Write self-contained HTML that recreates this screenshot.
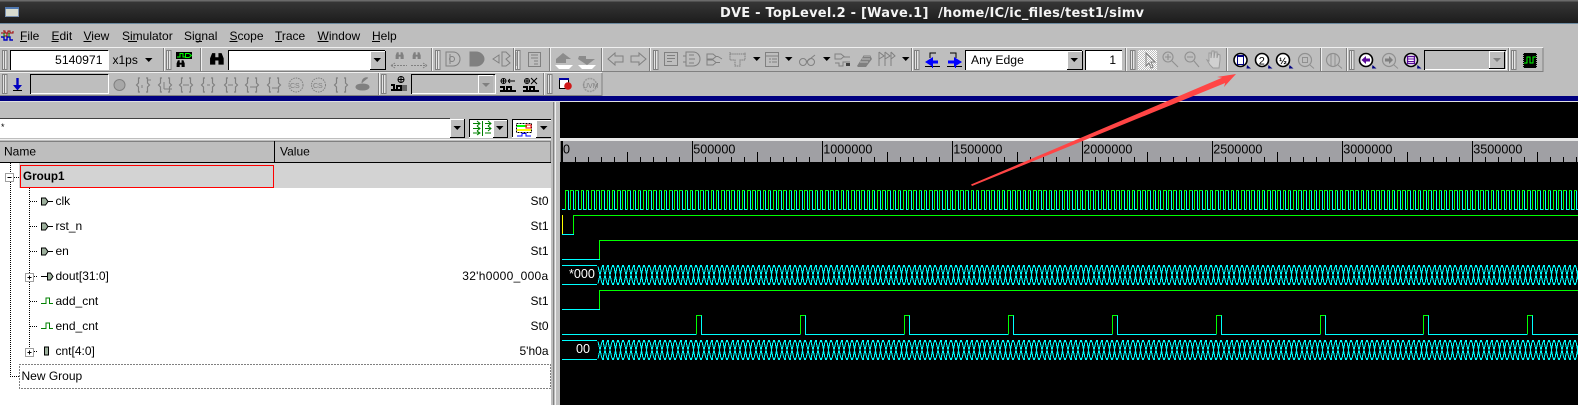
<!DOCTYPE html>
<html><head><meta charset="utf-8"><title>DVE</title>
<style>
html,body{margin:0;padding:0;width:1578px;height:405px;overflow:hidden;background:#bebebe}
svg{display:block}
text{font-family:"Liberation Sans",sans-serif;font-size:12px;fill:#000;white-space:pre}
.g{fill:none;stroke:#808080}
.k{fill:none;stroke:#000}
.r{text-anchor:end}
.dot{fill:none;stroke:#000;stroke-dasharray:1 1;shape-rendering:crispEdges}
.gf{fill:#808080;stroke:none}
.kf{fill:#000;stroke:none}
</style></head><body>
<svg id="s" width="1578" height="405" viewBox="0 0 1578 405" xmlns="http://www.w3.org/2000/svg">
<defs>
<linearGradient id="tb" x1="0" y1="0" x2="0" y2="1"><stop offset="0" stop-color="#383838"/><stop offset="1" stop-color="#1c1c1c"/></linearGradient>
<pattern id="dith" width="2" height="2" patternUnits="userSpaceOnUse"><rect width="2" height="2" fill="#fff"/><rect width="1" height="1" fill="#bebebe"/><rect x="1" y="1" width="1" height="1" fill="#bebebe"/></pattern>
<g id="H"><rect x=".5" y=".5" width="4.5" height="19" fill="#e4e4e4" stroke="#808080"/><path d="M2.5 1v18" stroke="#808080"/></g>
<g id="B"><path class="g" d="M5 1H3.5V6L1.5 8 3.5 10V15H5M11 1H12.5V6L14.5 8 12.5 10V15H11" stroke-width="1.2"/></g>
<g id="T"><path class="kf" d="M0 0H7.5L3.75 4Z"/></g>
<g id="P"><path d="M41.5 -3.5H45.5L48 0 45.5 3.5H41.5Z" fill="#9db09d" stroke="#000"/><path d="M48 0H53" stroke="#000"/></g>
<g id="W"><path d="M41 3H46V-2.5H49.5V3H53" fill="none" stroke="#008000" stroke-width="1"/></g>
<g id="C"><circle r="6.5" fill="#fff" stroke="#000" stroke-width="1.6"/><path d="M5 5L9 8.5H4.5Z" fill="#000080" transform="translate(1.5 0)"/></g>
<g id="D"><circle r="6.5" fill="none" stroke="#909090" stroke-width="1.2"/><path d="M5 5L9 8.5" stroke="#909090"/></g>
<g id="Bino"><path d="M1 13V7L3 2H6V6H9V2H12L14 7V13H9V9H6V13Z"/></g>
</defs>

<!-- background + title bar -->
<rect width="1578" height="405" fill="#bebebe"/>
<rect width="1578" height="23" fill="url(#tb)"/>
<rect width="1578" height="1.5" fill="#6a6a6a"/>
<rect y="23" width="1578" height="1" fill="#6c8aa0"/>
<rect x="5.5" y="7.5" width="13" height="9" fill="#d8dcd0" stroke="#7890b0"/><rect x="5" y="7" width="14" height="2" fill="#5078b0"/>
<text x="720" y="17" textLength="424" style="font-family:'DejaVu Sans',sans-serif;font-weight:bold;font-size:13px;fill:#f4f4f4">DVE - TopLevel.2 - [Wave.1]  /home/IC/ic_files/test1/simv</text>

<!-- menu -->
<g transform="translate(1 30)"><path d="M2 1H4V3H7V1H9V3H12V1M0 3H3V6H6V3" fill="none" stroke="#a00000"/><path d="M0 7H3V10H6V7H9V10H12" fill="none" stroke="#0000c0" stroke-width="1.4"/><path d="M3 3V7M8 3V7" stroke="#008000"/></g>
<text x="20" y="40">File</text><path d="M20 41.5h7" stroke="#000"/>
<text x="51.5" y="40">Edit</text><path d="M51.5 41.5h7" stroke="#000"/>
<text x="83.5" y="40">View</text><path d="M83.5 41.5h8" stroke="#000"/>
<text x="122" y="40">Simulator</text><path d="M128 41.5h9" stroke="#000"/>
<text x="184" y="40">Signal</text><path d="M196 41.5h6" stroke="#000"/>
<text x="229.5" y="40">Scope</text><path d="M229.5 41.5h8" stroke="#000"/>
<text x="275" y="40">Trace</text><path d="M275 41.5h7" stroke="#000"/>
<text x="317.5" y="40">Window</text><path d="M317.5 41.5h11" stroke="#000"/>
<text x="372" y="40">Help</text><path d="M372 41.5h8" stroke="#000"/>

<!-- toolbar rows frame -->
<path d="M0 47.5H1543M0 72.5H602" stroke="#f0f0f0"/>
<path d="M0 71.5H1543V48M0 95.5H602V73" stroke="#808080" fill="none"/>
<g fill="none" stroke="#808080">
<path d="M163.5 48V71M200.5 48V71M431.5 48V71M513.5 48V71M549.5 48V71M601.5 48V71M649.5 48V71M911.5 48V71M1125.5 48V71M1226.5 48V71M1320.5 48V71M1346.5 48V71M1508.5 48V71M378.5 73V95M543.5 73V95"/>
</g>
<g fill="none" stroke="#f0f0f0">
<path d="M164.5 48V71M201.5 48V71M432.5 48V71M514.5 48V71M550.5 48V71M602.5 48V71M650.5 48V71M912.5 48V71M1126.5 48V71M1227.5 48V71M1321.5 48V71M1347.5 48V71M1509.5 48V71M379.5 73V95M544.5 73V95"/>
</g>
<use href="#H" x="2" y="50"/><use href="#H" x="166" y="50"/><use href="#H" x="435" y="50"/><use href="#H" x="515" y="50"/><use href="#H" x="653" y="50"/><use href="#H" x="914" y="50"/><use href="#H" x="1130" y="50"/><use href="#H" x="1349" y="50"/><use href="#H" x="1511" y="50"/>
<use href="#H" x="2" y="74"/><use href="#H" x="381" y="74"/><use href="#H" x="547" y="74"/>

<!-- entries row 1 -->
<rect x="10" y="50" width="98" height="20" fill="#fff"/><path d="M10.5 70V50.5H108" class="k"/><path d="M11 69.5H108.5V51" fill="none" stroke="#fff"/>
<text class="r" x="102.5" y="64" style="font-size:12.2px">5140971</text>
<text x="112.5" y="64" style="font-size:12px">x1ps</text>
<use href="#T" x="145" y="58"/>

<g transform="translate(176 52)"><rect y="0" width="16" height="7" fill="#000"/><path d="M1 5H4V1.5H7V5H9" fill="none" stroke="#00ff00"/><path d="M9.5 1.5H13L15.5 3.5 13 5.5H9.5Z" fill="none" stroke="#00ff00"/><g transform="translate(0 7) scale(.62)" fill="#000"><use href="#Bino"/></g></g>
<g transform="translate(209 51) scale(1.05)" fill="#000"><use href="#Bino"/></g>

<rect x="228" y="50" width="157" height="20" fill="#fff"/><path d="M228.5 70V50.5H385" class="k"/>
<rect x="370" y="51" width="15" height="18" fill="#bebebe"/><path d="M370.5 69V51.5H385" stroke="#fff" fill="none"/><path d="M370 69.5H385.5V51" class="k"/><use href="#T" x="373.5" y="58"/>

<g fill="#808080"><g transform="translate(395 51) scale(.62)"><use href="#Bino"/></g><g transform="translate(412 51) scale(.62)"><use href="#Bino"/></g></g>
<path d="M391 65.5H407M391 65.5L395 63M391 65.5L395 68M411 65.5H427M427 65.5L423 63M427 65.5L423 68" class="g" stroke-dasharray="2 1"/>

<g class="g">
<path d="M446 52H453C458 52 460 56 460 59S458 66 453 66H446ZM450 54V64" /><circle cx="452" cy="59" r="2.5"/>
<path d="M470 52H476C481 52 484 56 484 59S481 66 476 66H470Z" fill="#808080"/>
<path d="M493 59L499 55V63ZM502 52H506L510 56 506 59 510 63 506 66H502Z"/>
<rect x="528.5" y="52.5" width="12" height="14"/><path d="M531 55h7M531 58h7M534 61h4M534 64h4"/>
<path d="M520 52V66M517 52V66"/>
</g>
<g class="gf"><path d="M556 63H566V59H571L563 53 556 59Z" opacity=".8"/><path d="M555 65H573L569 69H559Z" fill="#fff"/><path d="M579 56H586V59H595L587 65 578 59Z" opacity=".8"/><path d="M578 65H596L592 69H582Z" fill="#fff"/></g>
<g class="g"><path d="M608 59L615 53V56H623V62H615V65Z"/><path d="M646 59L639 53V56H631V62H639V65Z"/>
<rect x="664.5" y="52.5" width="13" height="13"/><path d="M667 55.5h8M667 58.5h8M667 61.5h5"/>
<path d="M686 52H693C698 52 700 56 700 59S698 66 693 66H686ZM683 56H686M683 62H686M689 55h5M689 59h6M689 63h5"/>
<path d="M707 54H713L716 56.5 713 59H707ZM716 56.5H718M707 60H713L716 62.5 713 65H707ZM716 62.5H720M718 56.5L722 59"/>
<path d="M730 52V54H745V52M730 54V60H735V66H740V60H745V54" stroke-dasharray="1.5 .6"/>
<rect x="765.5" y="52.5" width="13" height="14"/><path d="M766 56h12M769 59h2M772 59h5M772 62h5M769 62h2"/>
<circle cx="803" cy="62" r="3.5"/><circle cx="811" cy="62" r="3.5"/><path d="M806 62L815 55"/>
<path d="M835 54H841L844 56.5 841 59H835ZM844 57H850M835 63H839V66H843V62H850"/>
</g>
<rect x="846" y="63" width="4" height="3" fill="#404040"/>
<path d="M857 66L864 55H870L872 59 866 67H858Z" fill="#808080"/><path d="M860 62h8M862 59h8M864 56h6" stroke="#bebebe"/>
<path d="M879 52V66M885 52V66M891 52V66M879 52L884 56 879 59M885 52L890 56 885 59M891 52L895 56 891 59" class="g"/>
<use href="#T" x="753" y="57"/><use href="#T" x="785" y="57"/><use href="#T" x="823" y="57"/><use href="#T" x="902" y="57"/>

<!-- edge buttons -->
<g fill="none" stroke="#000"><path d="M930 58V53H936"/><path d="M925 66.5H940"/><path d="M956 58V53H950"/><path d="M947 66.5H962"/></g>
<path d="M925 62L933 57V60.5H938V63.5H933V67Z" fill="#0000ff"/><path d="M962 62L954 57V60.5H948V63.5H954V67Z" fill="#0000ff"/>
<path d="M932.5 59V68M955.5 59V68" stroke="#0000ff" fill="none"/>

<rect x="965" y="50" width="117" height="20" fill="#fff"/><path d="M965.5 70V50.5H1082" class="k"/>
<text x="971" y="64" style="font-size:12.2px">Any Edge</text>
<rect x="1067" y="51" width="15" height="18" fill="#bebebe"/><path d="M1067.5 69V51.5H1082" stroke="#fff" fill="none"/><path d="M1067 69.5H1082.5V51" class="k"/><use href="#T" x="1070.5" y="58"/>
<rect x="1085" y="50" width="37" height="20" fill="#fff"/><path d="M1085.5 70V50.5H1122" class="k"/><text class="r" x="1116" y="64">1</text>

<!-- pointer/zoom -->
<rect x="1138" y="50" width="19" height="20" fill="url(#dith)"/>
<path d="M1146 53V66L1149 63 1151 68 1153 67 1151 62H1155Z" class="g"/>
<g stroke="#909090" fill="none" stroke-width="1.1"><circle cx="1168" cy="57" r="5"/><path d="M1172 61L1178 67M1165 57h6M1168 54v6"/><circle cx="1190" cy="57" r="5"/><path d="M1194 61L1199 67M1187 57h6"/></g>
<path d="M1207 60L1210 65 1213 68H1219L1220 60V55L1218 54 1217 58V52L1215 52 1214 58V51L1212 51 1211 58V53L1209 53 1209 61Z" fill="#d0d0d0" stroke="#9a9a9a"/>

<use href="#C" x="1240.5" y="60"/><rect x="1237.5" y="55.5" width="6" height="9" fill="#fff" stroke="#000080"/><rect x="1237" y="55" width="7" height="2" fill="#000080"/>
<use href="#C" x="1262" y="60"/><text x="1258.7" y="64.5" style="font-size:11px">2</text>
<use href="#C" x="1283" y="60"/><text x="1279" y="64" style="font-size:9.5px;font-weight:bold">½</text>
<use href="#D" x="1305" y="60"/><rect x="1302.5" y="57.5" width="5" height="5" stroke="#909090" fill="none"/>
<use href="#D" x="1333" y="60"/><path d="M1331 54V66M1335 54V66" stroke="#909090" fill="none"/>
<use href="#C" x="1366" y="60"/><path d="M1361.5 60L1366 56V58.5H1370V61.5H1366V64Z" fill="#5a0a9a"/>
<use href="#D" x="1389" y="60"/><path d="M1393 60L1389 56V58.5H1385V61.5H1389V64Z" fill="#808080"/>
<use href="#C" x="1411" y="60"/><rect x="1407.5" y="56.5" width="7" height="7" fill="#fff" stroke="#5a0a9a" stroke-width="1.4"/><path d="M1408 59h6M1408 61.5h6" stroke="#5a0a9a"/>
<path d="M1424.5 70V50.5H1506" class="k"/><path d="M1425 69.5H1506.5V51" fill="none" stroke="#fff"/>
<rect x="1489" y="51" width="15" height="18" fill="#bebebe"/><path d="M1489.5 69V51.5H1504" stroke="#fff" fill="none"/><path d="M1489 68.5H1504.5V52" class="k"/><path d="M1493 58H1501L1497 62Z" fill="#808080"/>
<rect x="1523" y="53" width="14" height="15" fill="#000"/><path d="M1523.5 53V68M1536.5 53V68" stroke="#aaa" stroke-dasharray="1 1"/><path d="M1524 63H1527V57H1530V63H1533V57H1536" stroke="#00ff00" fill="none"/>

<!-- row 2 -->
<path d="M17.5 78V87" stroke="#0000c0" stroke-width="2.4"/><path d="M13 85H22L17.5 90.5Z" fill="#0000c0"/><path d="M13 90.5h9" stroke="#000"/>
<path d="M30.5 94V74.5H108" class="k"/><path d="M31 93.5H108.5V75" fill="none" stroke="#fff"/>
<circle cx="119.5" cy="85" r="5.5" fill="#a8a8a8" stroke="#808080"/>
<use href="#B" x="135" y="77"/><use href="#B" x="157" y="77"/><use href="#B" x="178" y="77"/><use href="#B" x="200" y="77"/><use href="#B" x="223" y="77"/><use href="#B" x="244" y="77"/><use href="#B" x="266" y="77"/><use href="#B" x="333" y="77"/>
<g class="g"><path d="M142 85V88M147 80H151M164 82V89M164 89H172M183 85H189M207 85H210M228 85H233M250 87H257M272 88H279"/></g>
<g fill="none" stroke="#808080" stroke-dasharray="1.5 1"><circle cx="296" cy="85" r="7"/><circle cx="318.5" cy="85" r="7"/></g>
<text x="290" y="88" style="font-size:7px;fill:#808080">CS</text><text x="313" y="88" style="font-size:7px;fill:#808080">CS</text>
<path d="M356 87C356 83 369 83 369 87 369 91 356 91 356 87ZM362 83C362 79 365 77 368 78" fill="#808080" stroke="#808080"/>
<g transform="translate(391 76)"><circle cx="10" cy="3.5" r="3" fill="#fff" class="k"/><path d="M10 0V7M7 3.5H13" stroke="#000"/><path d="M0 9H3V14H6V10H10V14H11" fill="none" stroke="#000" stroke-width="2"/><rect y="13" width="11" height="2" fill="#000"/><rect x="11" y="9" width="5" height="6" fill="#666"/></g>
<path d="M411.5 94V74.5H495" class="k"/><path d="M412 93.5H495.5V75" fill="none" stroke="#fff"/>
<rect x="478" y="75" width="15" height="18" fill="#b4b4b4"/><path d="M478.5 93V75.5H493" stroke="#fff" fill="none"/><path d="M482 83H490L486 87Z" fill="#808080"/>
<g transform="translate(500 78)"><circle cx="3.5" cy="3" r="2.5" fill="#fff" class="k"/><path d="M3.5 .5V5.5M1 3H6M8 3H15M8 3L10 1M8 3L10 5" stroke="#000" fill="none"/><path d="M0 9H4V13H7V9H11V13H15" stroke="#000" stroke-width="2" fill="none"/><rect y="12" width="16" height="2" fill="#000"/></g>
<g transform="translate(523 78)"><circle cx="4" cy="3" r="2.5" fill="#fff" class="k"/><path d="M4 .5V5.5M1.5 3H6.5M8 0L14 6M14 0L8 6" stroke="#000" fill="none"/><path d="M0 9H4V13H7V9H11V13H15" stroke="#000" stroke-width="2" fill="none"/><rect y="12" width="16" height="2" fill="#000"/></g>
<rect x="559.5" y="78.5" width="9" height="10" fill="#fff" stroke="#000"/><rect x="559" y="78" width="10" height="2" fill="#0000a0"/><circle cx="568" cy="86" r="3.8" fill="#d01818"/>
<g fill="none" stroke="#9a9a9a" stroke-width="1.5" stroke-dasharray="2 .8"><circle cx="590" cy="85" r="6.5"/></g><text x="583" y="88" style="font-size:7px;fill:#808080">UVM</text>

<!-- navy band -->
<rect y="96" width="1578" height="5" fill="#000080"/>
<rect y="101" width="1578" height="1" fill="#e0e0e0"/>

<!-- left pane -->
<rect x="0" y="118" width="450" height="20" fill="#fff"/><path d="M0 118.5H450" stroke="#404040"/>
<text x="1" y="130" style="font-size:9px">*</text>
<rect x="450" y="119" width="15" height="18" fill="#bebebe"/><path d="M450.5 137V119.5H464" stroke="#fff" fill="none"/><path d="M450 137.5H464.5V119" class="k"/><use href="#T" x="453.5" y="126"/>
<rect x="469" y="119" width="38" height="19" fill="#fff"/><path d="M469.5 137V119.5H507V137" class="k"/>
<g stroke="#008000" fill="none"><path d="M473 123.5H480M477 121L480 123.5 477 126M473 128.5H480M477 126L480 128.5 477 131M473 133H480M477 131L480 133 477 135M482.5 121V136M485 123.5H491M488 121L491 123.5 488 126M485 128.5H491M488 126L491 128.5 488 131M485 133H491"/></g>
<rect x="493" y="120" width="14" height="17" fill="#bebebe"/><path d="M493.5 137V120.5H507" stroke="#fff" fill="none"/><path d="M493 137.5H507.5V120" class="k"/><use href="#T" x="496" y="126"/>
<rect x="512" y="119" width="39" height="19" fill="#fff"/><path d="M512.5 137V119.5H551V137" class="k"/>
<rect x="516.5" y="123.5" width="15" height="9" fill="none" stroke="#000" stroke-dasharray="2 1"/><path d="M517 126H527" stroke="#00ff00" stroke-width="2"/><rect x="526" y="125" width="5" height="3" fill="none" stroke="#ff0000"/><path d="M517 130H531" stroke="#ffff00" stroke-width="2"/><path d="M517 136H522V133.5H526V136H531" stroke="#0000ff" fill="none"/>
<rect x="536" y="120" width="15" height="17" fill="#bebebe"/><path d="M536.5 137V120.5H551" stroke="#fff" fill="none"/><path d="M536 137.5H551.5V120" class="k"/><use href="#T" x="540" y="126"/>
<path d="M0 139.5H551" stroke="#f0f0f0"/>

<rect x="0" y="141" width="274" height="22" fill="#bebebe"/><path d="M0 141.5H274" stroke="#808080"/><path d="M0 162.5H274.5V141" class="k"/>
<rect x="275" y="141" width="276" height="22" fill="#bebebe"/><path d="M275 141.5H551" stroke="#808080"/><path d="M275 162.5H551" class="k"/><path d="M550.5 141V162" stroke="#808080"/>
<text x="4" y="155.5">Name</text><text x="280" y="155.5">Value</text>

<rect x="0" y="163" width="551" height="242" fill="#fff"/>
<rect x="19" y="163" width="532" height="25" fill="#d3d3d3"/>
<rect x="20.5" y="165.5" width="253" height="22" fill="none" stroke="#ff0000"/>
<text x="23" y="180" style="font-weight:bold;font-size:11.7px">Group1</text>

<!-- tree -->
<path class="dot" d="M10.5 163V173M10.5 182V376.5H19M14 177.5H19M29.5 188V273M29.5 282V348M30 201.5H38M30 226.5H38M30 251.5H38M34 276.5H38M30 301.5H38M30 326.5H38M34 351.5H38"/>
<g fill="#fff" stroke="#a0a0a0"><rect x="5.5" y="173.5" width="8" height="8"/><rect x="25.5" y="273.5" width="8" height="8"/><rect x="25.5" y="348.5" width="8" height="8"/></g>
<path d="M7.5 177.5H11.5M27.5 277.5H31.5M29.5 275.5V279.5M27.5 352.5H31.5M29.5 350.5V354.5" stroke="#000"/>
<use href="#P" y="201.5"/><use href="#P" y="226.5"/><use href="#P" y="251.5"/>
<path d="M41 276.5H47" stroke="#000"/><path d="M53 276.5L50.5 273H47.5V280H50.5Z" fill="#9db09d" stroke="#000"/>
<use href="#W" y="300.5"/><use href="#W" y="325.5"/>
<rect x="44.5" y="347" width="4" height="8" fill="#9db09d" stroke="#000"/>

<text x="55.5" y="205">clk</text><text x="55.5" y="230">rst_n</text><text x="55.5" y="255">en</text><text x="55.5" y="280">dout[31:0]</text><text x="55.5" y="305">add_cnt</text><text x="55.5" y="330">end_cnt</text><text x="55.5" y="355">cnt[4:0]</text>
<text x="21.5" y="380">New Group</text>
<path d="M19.5 364.5H550.5V388.5H19.5V364.5" fill="none" stroke="#000" stroke-dasharray="1 2" shape-rendering="crispEdges"/>
<text class="r" x="548.5" y="205">St0</text><text class="r" x="548.5" y="230">St1</text><text class="r" x="548.5" y="255">St1</text><text class="r" x="548.5" y="280" style="letter-spacing:.3px">32'h0000_000a</text><text class="r" x="548.5" y="305">St1</text><text class="r" x="548.5" y="330">St0</text><text class="r" x="548.5" y="355">5'h0a</text>

<!-- splitter -->
<rect x="551" y="102" width="9" height="303" fill="#bebebe"/>
<path d="M555.5 102V405" stroke="#f0f0f0"/><path d="M553.5 102V405" stroke="#808080"/>

<!-- wave pane -->
<rect x="560" y="102" width="1018" height="303" fill="#000"/>
<rect x="560" y="138" width="1018" height="3" fill="#e8e8e8"/>
<rect x="562" y="141" width="1016" height="21" fill="#a0a0a4"/>
<path d="M560.5 141V162" stroke="#808080"/>
<g id="ruler"></g>
<g>
<text x="563" y="153.5" style="font-size:12.6px">0</text>
<text x="693.3" y="153.5" style="font-size:12.6px">500000</text>
<text x="823.3" y="153.5" style="font-size:12.6px">1000000</text>
<text x="953.3" y="153.5" style="font-size:12.6px">1500000</text>
<text x="1083.3" y="153.5" style="font-size:12.6px">2000000</text>
<text x="1213.3" y="153.5" style="font-size:12.6px">2500000</text>
<text x="1343.3" y="153.5" style="font-size:12.6px">3000000</text>
<text x="1473.3" y="153.5" style="font-size:12.6px">3500000</text>
</g>
<g id="waves" shape-rendering="crispEdges"></g>
<text x="569" y="278" style="font-size:12.6px;fill:#fff">*000</text>
<text x="576" y="353" style="font-size:12.6px;fill:#fff">00</text>

<!-- red arrow -->
<path d="M971 184.5L1222 77.8 1217 77 1236 74 1224 87 1225.2 83 972 186Z" fill="#ff4545"/>
</svg>
<script>
(function(){
var G='#00ff00',C='#00ffff',W=1578;
var wg=[],cy=[];
function r(x){return Math.round(x)+.5}
// clock
var gp='',cp='M562 209.5H'+r(565);
for(var k=0;;k++){var x=565+2.6*k;if(x>W)break;var x2=565+2.6*(k+1);
 if(k%2==0){gp+='M'+r(x)+' 209.5V190.5H'+r(x2);}
 else{cp+='M'+r(x)+' 190.5V209.5H'+r(x2);}}
wg.push(gp);cy.push(cp);
// rst
cy.push('M562 234.5H574');wg.push('M573.5 234V215.5H1578');
// en, add
cy.push('M562 259.5H600');wg.push('M599.5 259V240.5H1578');
cy.push('M562 309.5H600');wg.push('M599.5 309V290.5H1578');
// end_cnt
var e='M562 334.5',g2='';
for(var k=0;k<10;k++){var a=695.7+103.97*k;if(a>W)break;
 e+='H'+r(a)+'M'+r(a+5)+' 315V334.5';g2+='M'+r(a)+' 334V315.5H'+r(a+5);}
e+='H1578';cy.push(e);wg.push(g2);
// buses: X crossings plus thick blocks along the rails
function bus(t,b){var p='M562 '+(t+.5)+'H597M562 '+(b+.5)+'H597',q='';
 for(var k=0;;k++){var x=599.7+5.2*k;if(x>W+3)break;
  var l=Math.round(x-1.8),m=Math.round(x+1.8),n=Math.round(x+3.4);
  p+='M'+l+' '+(t+1.5)+'L'+m+' '+(b-.5)+'M'+l+' '+(b-.5)+'L'+m+' '+(t+1.5);
  q+='<rect x="'+m+'" y="'+t+'" width="'+Math.max(n-m,2)+'" height="2"/><rect x="'+m+'" y="'+(b-1)+'" width="'+Math.max(n-m,2)+'" height="2"/>';}
 cy.push(p);return q;}
var blocks=bus(265,284)+bus(340,359);
var h='<path d="'+cy.join('')+'" fill="none" stroke="'+C+'"/><path d="'+wg.join('')+'" fill="none" stroke="'+G+'"/><g fill="'+C+'">'+blocks+'</g>';
h+='<path d="M562.5 215V234" stroke="#ffff00"/>';
document.getElementById('waves').innerHTML=h;
// ruler
var t='';
for(var i=0;;i++){var x=562.3+13*i;if(x>W)break;var top=i%10==0?141:(i%5==0?152:157);
 t+='M'+r(x)+' '+top+'V162';}
document.getElementById('ruler').innerHTML='<path d="'+t+'" stroke="#000" fill="none" shape-rendering="crispEdges"/>';
})();
</script>
</body></html>
